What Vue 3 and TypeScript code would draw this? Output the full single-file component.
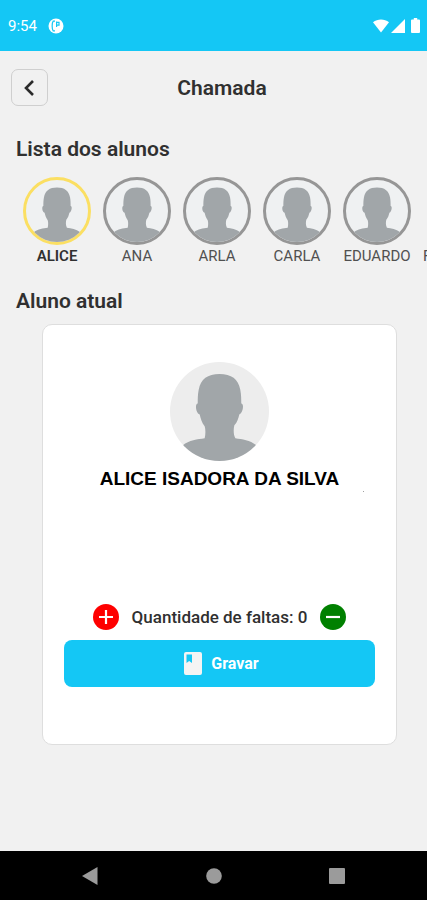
<script setup lang="ts">
import { computed, defineComponent, h, ref } from 'vue'

interface Student {
  short: string
  full: string
  absences: number
}

const students = ref<Student[]>([
  { short: 'ALICE', full: 'ALICE ISADORA DA SILVA', absences: 0 },
  { short: 'ANA', full: 'ANA', absences: 0 },
  { short: 'ARLA', full: 'ARLA', absences: 0 },
  { short: 'CARLA', full: 'CARLA', absences: 0 },
  { short: 'EDUARDO', full: 'EDUARDO', absences: 0 },
  { short: 'FRANCISCO', full: 'FRANCISCO', absences: 0 },
])
const selected = ref(0)
const current = computed(() => students.value[selected.value])

function change(step: number): void {
  current.value.absences = Math.max(0, current.value.absences + step)
}

function save(): void {
  selected.value = (selected.value + 1) % students.value.length
}

const Silhouette = defineComponent({
  setup: () => () =>
    h('svg', { viewBox: '0 0 100 100', 'aria-hidden': 'true' }, [
      h('path', {
        fill: '#a1a6a9',
        d: 'M50 12C62 12 69 17 71 28C72 33 72 38 72 42C75 42 74 51 70 53C69 57 68 61 65 64C64 68 64 73 66 77C73 78 81 79 87 84V100H13V84C19 79 28 78 35 77C36 73 36 68 35 65C32 61 31 57 30 53C26 52 25 42 28 42C28 37 28 33 29 28C31 17 38 12 50 12Z',
      }),
    ]),
})
</script>

<template>
  <div class="screen">
    <div class="status">
      <span class="clock">9:54</span>
      <svg class="app-mark" viewBox="0 0 16 16" aria-hidden="true">
        <circle cx="8" cy="8" r="7.5" fill="#fff" />
        <path d="M7 3.2H5.2C3.8 5 3.8 11 5.2 12.8H7M8.6 3.6V9M8.6 4.3H11V7.2H8.6" fill="none" stroke="#14c7f5" stroke-width="1.2" />
      </svg>
      <div class="signals">
        <svg width="16" height="14" viewBox="0 0 16 14" aria-hidden="true">
          <path d="M0 3.2C4.6-.4 11.4-.4 16 3.2L8 13.5Z" fill="#fff" />
        </svg>
        <svg width="14" height="14" viewBox="0 0 14 14" aria-hidden="true">
          <path d="M14 0V14H0Z" fill="#fff" />
        </svg>
        <svg class="battery" width="9" height="15" viewBox="0 0 9 15" aria-hidden="true">
          <path d="M2.8 0H6.2V1.5H8Q9 1.5 9 2.5V14Q9 15 8 15H1Q0 15 0 14V2.5Q0 1.5 1 1.5H2.8Z" fill="#fff" />
        </svg>
      </div>
    </div>

    <header class="topbar">
      <button class="back" type="button" aria-label="Voltar">
        <svg width="12" height="18" viewBox="0 0 12 18" aria-hidden="true">
          <path d="M9 2L2 9L9 16" fill="none" stroke="#2b2b2b" stroke-width="2.6" />
        </svg>
      </button>
      <h1>Chamada</h1>
    </header>

    <main>
      <h2>Lista dos alunos</h2>
      <div class="students">
        <button
          v-for="(student, index) in students"
          :key="student.short"
          type="button"
          class="student"
          :class="{ active: index === selected }"
          @click="selected = index"
        >
          <span class="portrait"><Silhouette /></span>
          <span>{{ student.short }}</span>
        </button>
      </div>

      <h2>Aluno atual</h2>
      <section class="card">
        <span class="portrait large"><Silhouette /></span>
        <p class="name">{{ current.full }}</p>
        <span class="speck"></span>
        <div class="counter">
          <button class="round add" type="button" aria-label="Adicionar falta" @click="change(1)">
            <svg width="26" height="26" viewBox="0 0 26 26" aria-hidden="true">
              <path d="M13 6V20M6 13H20" stroke="#fff" stroke-width="2.2" />
            </svg>
          </button>
          <span>Quantidade de faltas: {{ current.absences }}</span>
          <button class="round remove" type="button" aria-label="Remover falta" @click="change(-1)">
            <svg width="26" height="26" viewBox="0 0 26 26" aria-hidden="true">
              <path d="M6 13H20" stroke="#fff" stroke-width="2.2" />
            </svg>
          </button>
        </div>
        <button class="save" type="button" @click="save">
          <svg width="18" height="23" viewBox="0 0 18 23" aria-hidden="true">
            <path fill-rule="evenodd" d="M2 0H16Q18 0 18 2V21Q18 23 16 23H2Q0 23 0 21V2Q0 0 2 0ZM2.5 2.5V11L5.2 9L8 11V2.5Z" fill="#f4f4f4" />
          </svg>
          <span>Gravar</span>
        </button>
      </section>
    </main>

    <nav class="navbar">
      <button type="button" aria-label="Anterior">
        <svg width="16" height="18" viewBox="0 0 16 18" aria-hidden="true"><path d="M15.5 0V18L0 9Z" fill="#9b9b9b" /></svg>
      </button>
      <button type="button" aria-label="Início">
        <svg width="16" height="16" viewBox="0 0 16 16" aria-hidden="true"><circle cx="8" cy="8" r="7.8" fill="#9b9b9b" /></svg>
      </button>
      <button type="button" aria-label="Recentes">
        <svg width="16" height="16" viewBox="0 0 16 16" aria-hidden="true"><rect width="16" height="16" rx="1" fill="#9b9b9b" /></svg>
      </button>
    </nav>
  </div>
</template>

<style>
body {
  margin: 0;
}
</style>

<style scoped>
.screen {
  display: flex;
  flex-direction: column;
  min-height: 100vh;
  overflow: hidden;
  background: #f1f1f1;
  color: #303030;
  font-family: Roboto, sans-serif;
}
button {
  padding: 0;
  border: 0;
  background: none;
  color: inherit;
  font: inherit;
  cursor: pointer;
}
svg {
  display: block;
}
.status {
  display: flex;
  align-items: center;
  box-sizing: border-box;
  height: 51px;
  padding: 0 7px 0 8px;
  background: #14c7f5;
  color: #fff;
}
.clock {
  font-size: 15px;
}
.app-mark {
  width: 16px;
  height: 16px;
  margin-left: 11px;
}
.signals {
  display: flex;
  align-items: center;
  gap: 2px;
  margin-left: auto;
}
.battery {
  margin-left: 4px;
}
.topbar {
  display: grid;
  grid-template-columns: 37px 1fr 20px;
  align-items: center;
  padding: 18px 11px;
}
.back {
  display: flex;
  align-items: center;
  justify-content: center;
  box-sizing: border-box;
  width: 37px;
  height: 37px;
  border: 1px solid #cfcfcf;
  border-radius: 7px;
}
h1,
h2 {
  margin: 0;
  font-size: 21px;
  font-weight: 600;
  line-height: 24px;
}
h1 {
  text-align: center;
}
main {
  flex: 1;
  padding: 13px 0 24px;
}
h2 {
  padding: 0 16px;
}
.students {
  display: flex;
  gap: 12px;
  margin: 16px 0 24px;
  padding-left: 23px;
  overflow: hidden;
}
.student {
  display: flex;
  flex: none;
  flex-direction: column;
  align-items: center;
  gap: 2px;
  min-width: 68px;
  color: #505050;
  font-size: 15px;
  line-height: 18px;
}
.portrait {
  box-sizing: border-box;
  width: 68px;
  height: 68px;
  border: 3px solid #969696;
  border-radius: 50%;
  background: #eff1f2;
  overflow: hidden;
}
.student.active {
  color: #303030;
  font-weight: 600;
}
.student.active .portrait {
  border-color: #fbdf62;
}
.portrait.large {
  width: 99px;
  height: 99px;
  border: 0;
  background: #ededed;
}
.card {
  position: relative;
  display: flex;
  flex-direction: column;
  align-items: center;
  margin: 11px 30px 0 42px;
  padding: 37px 21px 57px;
  border: 1px solid #dedede;
  border-radius: 10px;
  background: #fff;
}
.name {
  margin: 6px 0 0;
  color: #000;
  font-family: "Liberation Sans", Arial, sans-serif;
  font-size: 19px;
  font-weight: 700;
  line-height: 24px;
}
.speck {
  position: absolute;
  top: 166px;
  right: 32px;
  width: 1px;
  height: 1px;
  background: #a0a0a0;
}
.counter {
  display: flex;
  align-items: center;
  gap: 13px;
  margin-top: 113px;
  font-size: 17px;
  font-weight: 500;
  line-height: 20px;
}
.round {
  width: 26px;
  height: 26px;
  border-radius: 50%;
}
.add {
  background: #fe0000;
}
.remove {
  background: #008000;
}
.save {
  display: flex;
  align-items: center;
  justify-content: center;
  gap: 9px;
  width: 100%;
  height: 47px;
  margin-top: 10px;
  padding-left: 4px;
  border-radius: 8px;
  background: #14c7f5;
  color: #fff;
  font-size: 16px;
  font-weight: 700;
}
.navbar {
  display: flex;
  align-items: center;
  justify-content: space-between;
  height: 49px;
  padding: 0 82px;
  background: #000;
}
</style>
